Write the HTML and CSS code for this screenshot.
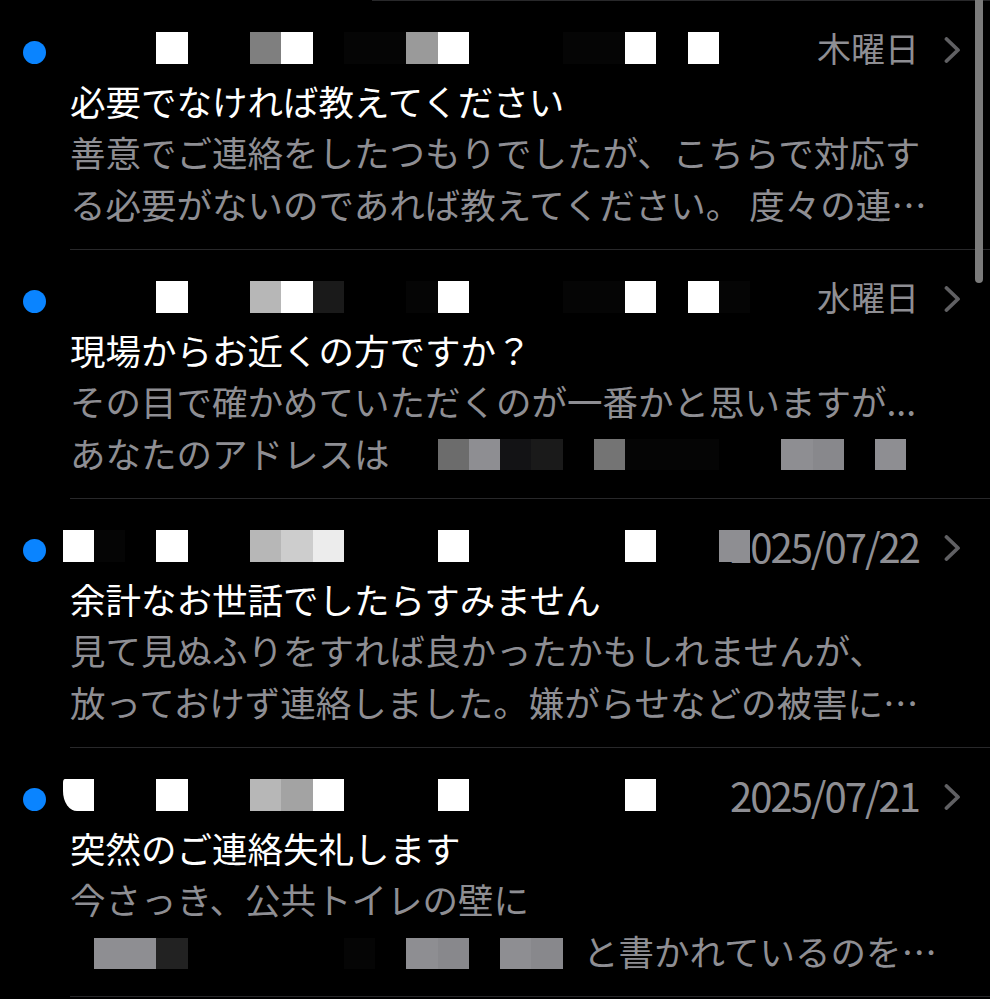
FILE: index.html
```html
<!DOCTYPE html>
<html lang="ja">
<head>
<meta charset="utf-8">
<title>メール</title>
<link rel="stylesheet" href="styles.css">
</head>
<body>
<main class="list">
  <div class="sep sep-top"></div>

  <article class="row">
    <div class="head">
      <span class="dot"></span>
      <div class="meta"><span class="date">木曜日</span><svg class="chev" viewBox="0 0 18 26"><path d="M3.5 2 L15 13 L3.5 24"/></svg></div>
      <div class="pix"><i></i><i></i><i></i><i class="w"></i><i></i><i></i><i class="m2"></i><i class="w"></i><i></i><i class="k1"></i><i class="k1"></i><i class="m4"></i><i class="w"></i><i></i><i></i><i></i><i class="k1"></i><i class="k1"></i><i class="w"></i><i></i><i class="w"></i></div>
    </div>
    <div class="subject">必要でなければ教えてください</div>
    <div class="line">善意でご連絡をしたつもりでしたが、こちらで対応す</div>
    <div class="line">る必要がないのであれば教えてください。 度々の連…</div>
  </article>
  <div class="sep"></div>

  <article class="row">
    <div class="head">
      <span class="dot"></span>
      <div class="meta"><span class="date">水曜日</span><svg class="chev" viewBox="0 0 18 26"><path d="M3.5 2 L15 13 L3.5 24"/></svg></div>
      <div class="pix"><i></i><i></i><i></i><i class="w"></i><i></i><i></i><i class="l1"></i><i class="w"></i><i class="k3"></i><i></i><i></i><i class="k1"></i><i class="w"></i><i></i><i></i><i></i><i class="k1"></i><i class="k1"></i><i class="w"></i><i></i><i class="w"></i><i class="k1"></i></div>
    </div>
    <div class="subject">現場からお近くの方ですか？</div>
    <div class="line">その目で確かめていただくのが一番かと思いますが...</div>
    <div class="line mix">
      <span class="txt">あなたのアドレスは</span>
      <div class="pix"><i></i><i></i><i></i><i></i><i></i><i></i><i></i><i></i><i></i><i></i><i></i><i></i><i class="m1"></i><i class="m3"></i><i class="k2"></i><i class="k3"></i><i></i><i class="m1b"></i><i class="k1"></i><i class="k1"></i><i class="k1"></i><i></i><i></i><i class="m3"></i><i class="m6"></i><i></i><i class="m3"></i></div>
    </div>
  </article>
  <div class="sep"></div>

  <article class="row">
    <div class="head">
      <span class="dot"></span>
      <div class="meta"><span class="date num">2025/07/22</span><svg class="chev" viewBox="0 0 18 26"><path d="M3.5 2 L15 13 L3.5 24"/></svg></div>
      <div class="pix"><i class="w"></i><i class="k1"></i><i></i><i class="w"></i><i></i><i></i><i class="l1"></i><i class="l2"></i><i class="l3"></i><i></i><i></i><i></i><i class="w"></i><i></i><i></i><i></i><i></i><i></i><i class="w"></i><i></i><i></i><i class="m3"></i></div>
    </div>
    <div class="subject">余計なお世話でしたらすみません</div>
    <div class="line">見て見ぬふりをすれば良かったかもしれませんが、</div>
    <div class="line">放っておけず連絡しました。嫌がらせなどの被害に…</div>
  </article>
  <div class="sep"></div>

  <article class="row">
    <div class="head">
      <span class="dot"></span>
      <div class="meta"><span class="date num">2025/07/21</span><svg class="chev" viewBox="0 0 18 26"><path d="M3.5 2 L15 13 L3.5 24"/></svg></div>
      <div class="pix"><i class="w soft"></i><i></i><i></i><i class="w"></i><i></i><i></i><i class="l1"></i><i class="m5"></i><i class="w"></i><i></i><i></i><i></i><i class="w"></i><i></i><i></i><i></i><i></i><i></i><i class="w"></i></div>
    </div>
    <div class="subject">突然のご連絡失礼します</div>
    <div class="line">今さっき、公共トイレの壁に</div>
    <div class="line mix">
      <div class="pix low"><i></i><i class="m3"></i><i class="m3"></i><i class="k4"></i><i></i><i></i><i></i><i></i><i></i><i class="k1"></i><i></i><i class="m3"></i><i class="m6"></i><i></i><i class="m3"></i><i class="m6"></i></div>
      <span class="txt after">と書かれているのを…</span>
    </div>
  </article>
  <div class="sep"></div>
</main>
<div class="scroll"></div>
</body>
</html>
```

FILE: styles.css
```css
html, body {
  margin: 0;
  padding: 0;
  background: #000;
}

body {
  width: 990px;
  height: 999px;
  overflow: hidden;
  font-family: "Noto Sans CJK JP", "Noto Sans", sans-serif;
  color: #fff;
}

.list {
  display: flex;
  flex-direction: column;
}

.sep {
  height: 1px;
  margin-left: 70px;
  background: #28282a;
}

.sep-top {
  margin-left: 372px;
}

.row {
  height: 248px;
  box-sizing: border-box;
  padding: 22px 0 20px;
}

.head {
  display: grid;
  height: 50px;
}

.head > * {
  grid-area: 1 / 1;
}

.dot {
  justify-self: start;
  align-self: center;
  width: 23px;
  height: 23px;
  margin: 8px 0 0 23px;
  border-radius: 50%;
  background: #0a84ff;
}

.pix {
  display: flex;
  align-self: center;
  justify-self: start;
  margin-left: 62.5px;
  z-index: 1;
}

.pix i {
  flex: none;
  display: block;
  width: 31.25px;
  height: 31.25px;
}

.pix .w { background: #ffffff; }
.pix .k1 { background: #050505; }
.pix .k2 { background: #131315; }
.pix .k3 { background: #1a1a1a; }
.pix .k4 { background: #222222; }
.pix .m1 { background: #6c6c6c; }
.pix .m1b { background: #747474; }
.pix .m2 { background: #7f7f7f; }
.pix .m3 { background: #8e8e92; }
.pix .m4 { background: #9a9a9a; }
.pix .m5 { background: #a3a3a3; }
.pix .m6 { background: #88888c; }
.pix .l1 { background: #b7b7b7; }
.pix .l2 { background: #cdcdcd; }
.pix .l3 { background: #ececec; }

.pix .soft {
  border-radius: 2px 0 0 14px / 4px 0 0 20px;
}

.meta {
  justify-self: end;
  align-self: center;
  display: flex;
  align-items: center;
  gap: 24px;
  padding-right: 29px;
}

.date {
  font-size: 34px;
  line-height: 50px;
  color: #8e8e93;
}

.date.num {
  font-size: 40px;
  letter-spacing: -2px;
}

.chev {
  width: 18px;
  height: 26px;
  margin-top: 4px;
  fill: none;
  stroke: #606063;
  stroke-width: 3.8;
  stroke-linecap: round;
  stroke-linejoin: round;
}

.subject {
  margin: 2px 0 0 70px;
  font-size: 35.5px;
  line-height: 51px;
  white-space: nowrap;
  color: #fff;
}

.line {
  margin-left: 70px;
  font-size: 35.5px;
  line-height: 51.5px;
  white-space: nowrap;
  color: #8e8e93;
}

.line.mix {
  display: grid;
}

.line.mix > * {
  grid-area: 1 / 1;
}

.line .pix {
  margin-left: -7.5px;
  margin-top: 5px;
}

.line .pix.low {
  margin-top: 7px;
}

.line .txt.after {
  padding-left: 513px;
}

.scroll {
  position: fixed;
  top: -10px;
  right: 7px;
  width: 8px;
  height: 293px;
  border-radius: 4px;
  background: #7b7b7b;
}
```
